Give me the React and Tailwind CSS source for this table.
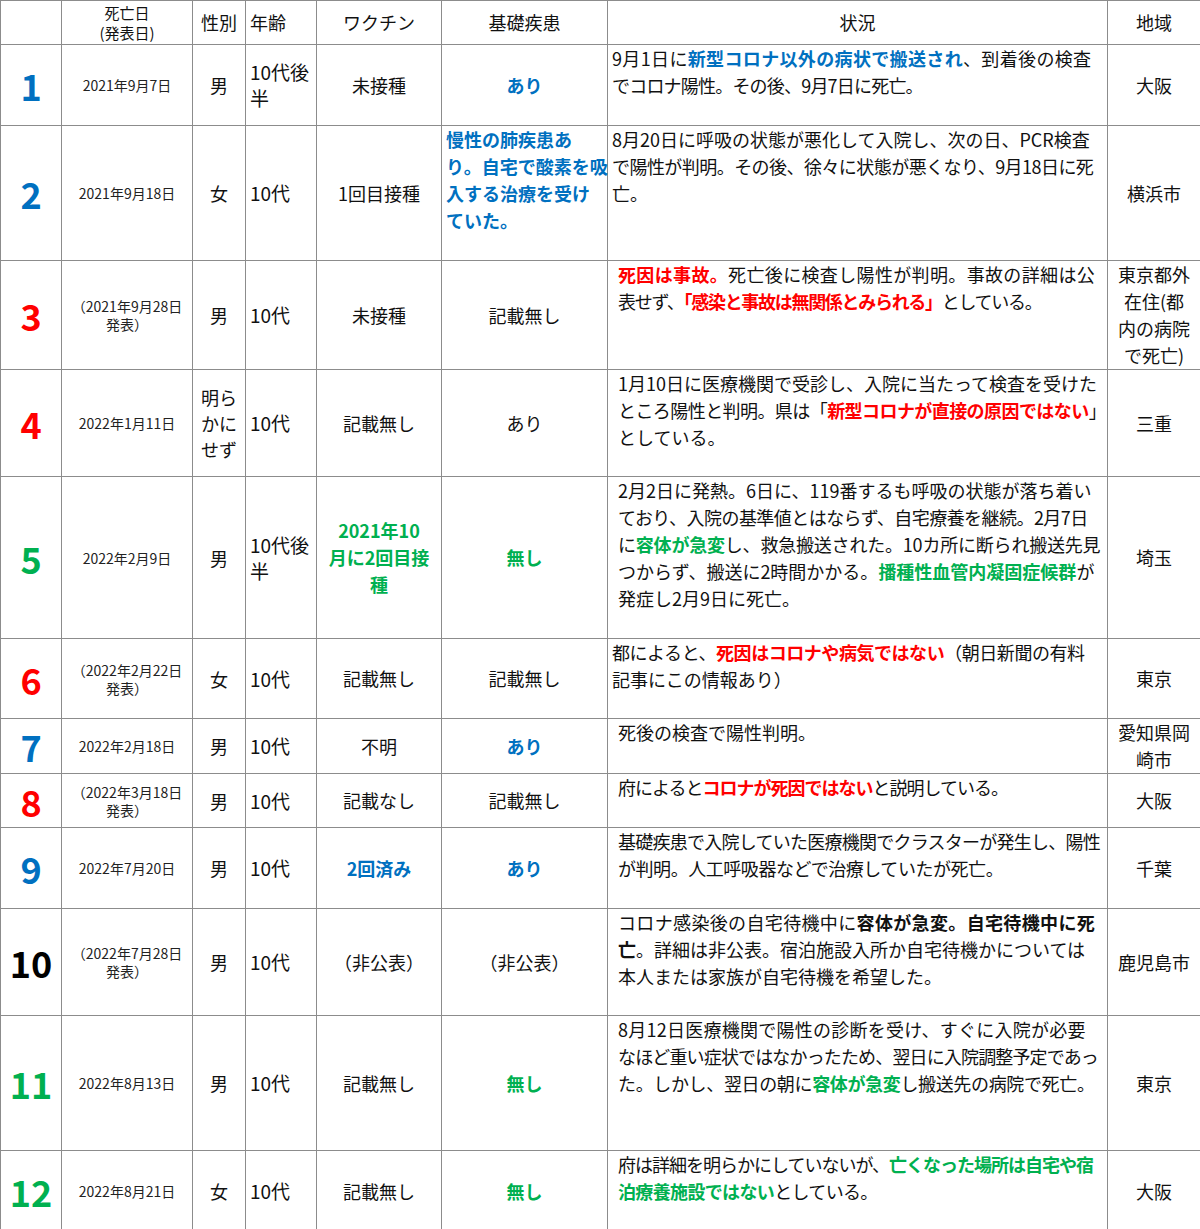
import React from "react";

const B = ({ children }) => <span className="font-bold text-[#0070c0]">{children}</span>;
const R = ({ children }) => <span className="font-bold text-[#ff0000]">{children}</span>;
const G = ({ children }) => <span className="font-bold text-[#00b050]">{children}</span>;
const K = ({ children }) => <span className="font-bold">{children}</span>;

// a line is either plain content or [content, trackingClass]
const Lines = ({ lines }) => (
  <>
    {lines.map((l, i) => {
      const [c, t] = Array.isArray(l) ? l : [l, ""];
      return (
        <div key={i} className={`whitespace-nowrap ${t}`}>
          {c}
        </div>
      );
    })}
  </>
);

const rows = [
  {
    h: "h-[81px]", n: "1", nc: "text-[#0070c0]",
    date: ["2021年9月7日"], sex: ["男"], age: ["10代後", "半"],
    vac: ["未接種"], base: [<B>あり</B>], baseLeft: false,
    status: [
      [<>9月1日に<B>新型コロナ以外の病状で搬送され</B>、到着後の検査</>, "tracking-[0.35px]"],
      ["でコロナ陽性。その後、9月7日に死亡。", "tracking-[-0.8px]"],
    ],
    indent: false, region: ["大阪"],
  },
  {
    h: "h-[135px]", n: "2", nc: "text-[#0070c0]",
    date: ["2021年9月18日"], sex: ["女"], age: ["10代"],
    vac: ["1回目接種"],
    base: [<B>慢性の肺疾患あ</B>, <B>り。自宅で酸素を吸</B>, <B>入する治療を受け</B>, <B>ていた。</B>],
    baseLeft: true,
    status: [
      "8月20日に呼吸の状態が悪化して入院し、次の日、PCR検査",
      ["で陽性が判明。その後、徐々に状態が悪くなり、9月18日に死", "tracking-[-0.55px]"],
      "亡。",
    ],
    indent: false, region: ["横浜市"],
  },
  {
    h: "h-[108px]", n: "3", nc: "text-[#ff0000]",
    date: ["（2021年9月28日", "発表）"], sex: ["男"], age: ["10代"],
    vac: ["未接種"], base: ["記載無し"],
    status: [
      [<><R>死因は事故。</R>死亡後に検査し陽性が判明。事故の詳細は公</>, "tracking-[0.35px]"],
      [<>表せず、<R>「感染と事故は無関係とみられる」</R>としている。</>, "tracking-[-1.3px]"],
    ],
    indent: true, region: ["東京都外", "在住(都", "内の病院", "で死亡)"],
  },
  {
    h: "h-[107px]", n: "4", nc: "text-[#ff0000]",
    date: ["2022年1月11日"], sex: ["明ら", "かに", "せず"], age: ["10代"],
    vac: ["記載無し"], base: ["あり"],
    status: [
      "1月10日に医療機関で受診し、入院に当たって検査を受けた",
      [<>ところ陽性と判明。県は「<R>新型コロナが直接の原因ではない</R>」</>, "tracking-[-0.57px]"],
      "としている。",
    ],
    indent: true, region: ["三重"],
  },
  {
    h: "h-[162px]", n: "5", nc: "text-[#00b050]",
    date: ["2022年2月9日"], sex: ["男"], age: ["10代後", "半"],
    vac: [<G>2021年10</G>, <G>月に2回目接</G>, <G>種</G>], base: [<G>無し</G>],
    status: [
      "2月2日に発熱。6日に、119番するも呼吸の状態が落ち着い",
      ["ており、入院の基準値とはならず、自宅療養を継続。2月7日", "tracking-[-0.55px]"],
      [<>に<G>容体が急変</G>し、救急搬送された。10カ所に断られ搬送先見</>, "tracking-[-0.2px]"],
      <>つからず、搬送に2時間かかる。<G>播種性血管内凝固症候群</G>が</>,
      "発症し2月9日に死亡。",
    ],
    indent: true, region: ["埼玉"],
  },
  {
    h: "h-[80px]", n: "6", nc: "text-[#ff0000]",
    date: ["（2022年2月22日", "発表）"], sex: ["女"], age: ["10代"],
    vac: ["記載無し"], base: ["記載無し"],
    status: [
      [<>都によると、<R>死因はコロナや病気ではない</R>（朝日新聞の有料</>, "tracking-[-0.45px]"],
      "記事にこの情報あり）",
    ],
    indent: false, region: ["東京"],
  },
  {
    h: "h-[54px]", n: "7", nc: "text-[#0070c0]",
    date: ["2022年2月18日"], sex: ["男"], age: ["10代"],
    vac: ["不明"], base: [<B>あり</B>],
    status: ["死後の検査で陽性判明。"],
    indent: true, region: ["愛知県岡", "崎市"],
  },
  {
    h: "h-[54px]", n: "8", nc: "text-[#ff0000]",
    date: ["（2022年3月18日", "発表）"], sex: ["男"], age: ["10代"],
    vac: ["記載なし"], base: ["記載無し"],
    status: [[<>府によると<R>コロナが死因ではない</R>と説明している。</>, "tracking-[-1px]"]],
    indent: true, region: ["大阪"],
  },
  {
    h: "h-[81px]", n: "9", nc: "text-[#0070c0]",
    date: ["2022年7月20日"], sex: ["男"], age: ["10代"],
    vac: [<B>2回済み</B>], base: [<B>あり</B>],
    status: [
      ["基礎疾患で入院していた医療機関でクラスターが発生し、陽性", "tracking-[-0.75px]"],
      ["が判明。人工呼吸器などで治療していたが死亡。", "tracking-[-0.45px]"],
    ],
    indent: true, region: ["千葉"],
  },
  {
    h: "h-[107px]", n: "10", nc: "text-black",
    date: ["（2022年7月28日", "発表）"], sex: ["男"], age: ["10代"],
    vac: ["（非公表）"], base: ["（非公表）"],
    status: [
      [<>コロナ感染後の自宅待機中に<K>容体が急変。自宅待機中に死</K></>, "tracking-[0.35px]"],
      <><K>亡</K>。詳細は非公表。宿泊施設入所か自宅待機かについては</>,
      "本人または家族が自宅待機を希望した。",
    ],
    indent: true, region: ["鹿児島市"],
  },
  {
    h: "h-[135px]", n: "11", nc: "text-[#00b050]",
    date: ["2022年8月13日"], sex: ["男"], age: ["10代"],
    vac: ["記載無し"], base: [<G>無し</G>],
    status: [
      ["8月12日医療機関で陽性の診断を受け、すぐに入院が必要", "tracking-[0.25px]"],
      ["なほど重い症状ではなかったため、翌日に入院調整予定であっ", "tracking-[-0.85px]"],
      [<>た。しかし、翌日の朝に<G>容体が急変</G>し搬送先の病院で死亡。</>, "tracking-[-0.35px]"],
    ],
    indent: true, region: ["東京"],
  },
  {
    h: "h-[81px]", n: "12", nc: "text-[#00b050]",
    date: ["2022年8月21日"], sex: ["女"], age: ["10代"],
    vac: ["記載無し"], base: [<G>無し</G>],
    status: [
      [<>府は詳細を明らかにしていないが、<G>亡くなった場所は自宅や宿</G></>, "tracking-[-1px]"],
      [<><G>泊療養施設ではない</G>としている。</>, "tracking-[-0.65px]"],
    ],
    indent: true, region: ["大阪"],
  },
];

const td = "border border-[#8c8c8c] align-middle";

export default function App() {
  return (
    <div className="w-[1200px] h-[1229px] bg-white text-[#111] font-['Noto_Sans_CJK_JP','Noto_Sans_CJK_SC',sans-serif] overflow-hidden">
      <table className="table-fixed border-collapse w-[1200px]">
        <colgroup>
          <col className="w-[61px]" />
          <col className="w-[131px]" />
          <col className="w-[53px]" />
          <col className="w-[71px]" />
          <col className="w-[125px]" />
          <col className="w-[166px]" />
          <col className="w-[500px]" />
          <col className="w-[93px]" />
        </colgroup>
        <thead>
          <tr className="h-[44px]">
            <th className={td}></th>
            <th className={`${td} font-normal text-[15px] leading-[20px] text-center`}>
              <div>死亡日</div>
              <div>(発表日)</div>
            </th>
            <th className={`${td} font-normal text-[18px] text-center px-0`}>性別</th>
            <th className={`${td} font-normal text-[18px] text-left pl-[4px]`}>年齢</th>
            <th className={`${td} font-normal text-[18px] text-center`}>ワクチン</th>
            <th className={`${td} font-normal text-[18px] text-center`}>基礎疾患</th>
            <th className={`${td} font-normal text-[18px] text-center`}>状況</th>
            <th className={`${td} font-normal text-[18px] text-center`}>地域</th>
          </tr>
        </thead>
        <tbody>
          {rows.map((r) => (
            <tr key={r.n} className={r.h}>
              <td className={`${td} text-center font-bold text-[36px] leading-none ${r.nc}`}>{r.n}</td>
              <td className={`${td} text-center text-[14px] leading-[18px] text-[#222]`}>
                <Lines lines={r.date} />
              </td>
              <td className={`${td} text-center text-[18px] leading-[26px] px-0`}>
                <Lines lines={r.sex} />
              </td>
              <td className={`${td} text-left text-[19px] leading-[26px] pl-[4px]`}>
                <Lines lines={r.age} />
              </td>
              <td className={`${td} text-center text-[18px] leading-[27px]`}>
                <Lines lines={r.vac} />
              </td>
              <td
                className={`${td} text-[18px] leading-[27px] ${
                  r.baseLeft ? "text-left align-top pl-[4px]" : "text-center"
                }`}
              >
                <Lines lines={r.base} />
              </td>
              <td
                className={`${td} align-top text-left text-[18px] leading-[27px] ${
                  r.indent ? "pl-[10px]" : "pl-[4px]"
                }`}
              >
                <Lines lines={r.status} />
              </td>
              <td className={`${td} text-center text-[18px] leading-[27px] px-0`}>
                <Lines lines={r.region} />
              </td>
            </tr>
          ))}
        </tbody>
      </table>
    </div>
  );
}
